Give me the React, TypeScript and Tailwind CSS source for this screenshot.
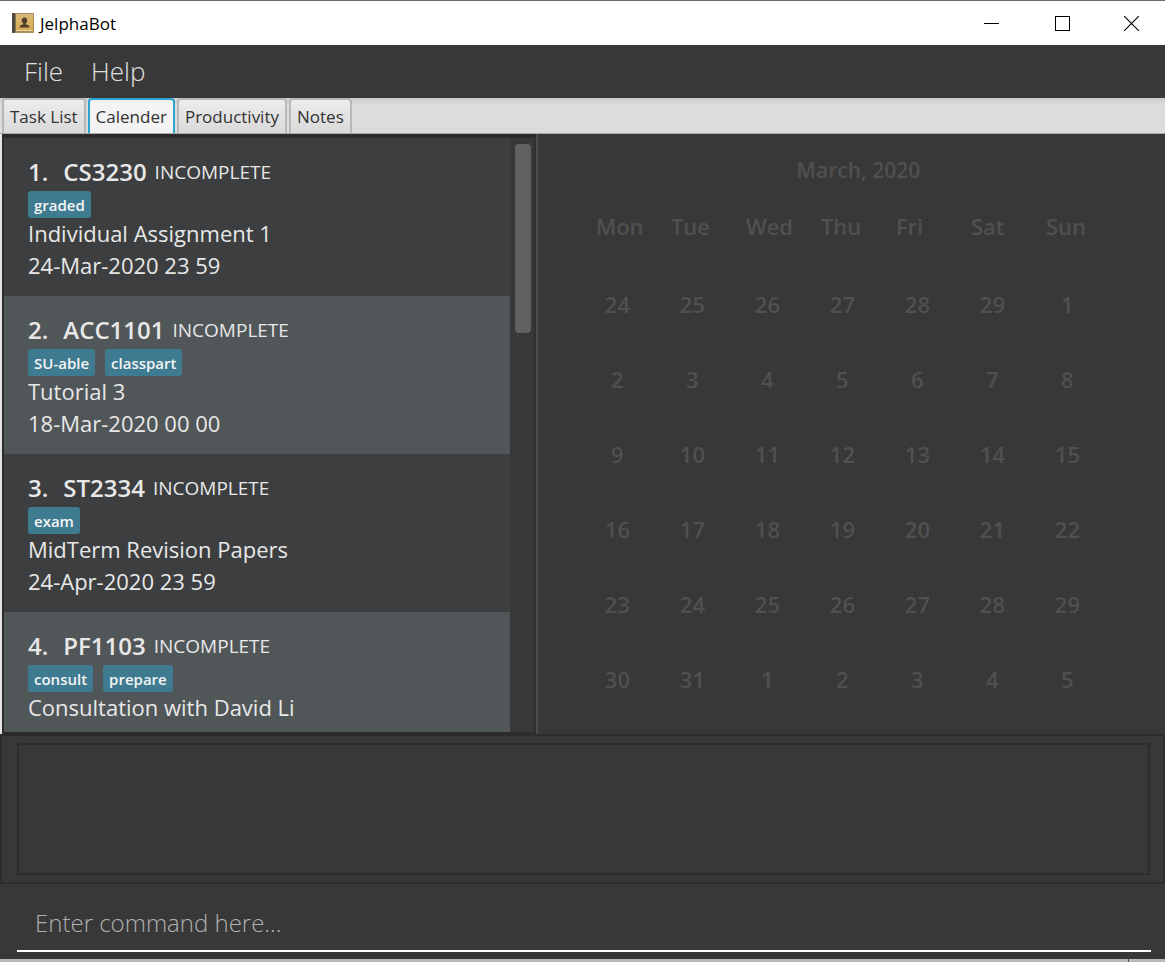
import { useState } from "react";

type Task = {
  module: string;
  status: string;
  tags: string[];
  description: string;
  due: string;
};

const tasks: Task[] = [
  { module: "CS3230", status: "INCOMPLETE", tags: ["graded"], description: "Individual Assignment 1", due: "24-Mar-2020 23 59" },
  { module: "ACC1101", status: "INCOMPLETE", tags: ["SU-able", "classpart"], description: "Tutorial 3", due: "18-Mar-2020 00 00" },
  { module: "ST2334", status: "INCOMPLETE", tags: ["exam"], description: "MidTerm Revision Papers", due: "24-Apr-2020 23 59" },
  { module: "PF1103", status: "INCOMPLETE", tags: ["consult", "prepare"], description: "Consultation with David Li", due: "" },
];

const tabs = ["Task List", "Calender", "Productivity", "Notes"];

const weekdays = ["Mon", "Tue", "Wed", "Thu", "Fri", "Sat", "Sun"];

const weeks = [
  [24, 25, 26, 27, 28, 29, 1],
  [2, 3, 4, 5, 6, 7, 8],
  [9, 10, 11, 12, 13, 14, 15],
  [16, 17, 18, 19, 20, 21, 22],
  [23, 24, 25, 26, 27, 28, 29],
  [30, 31, 1, 2, 3, 4, 5],
];

function BookIcon() {
  return (
    <svg width="22" height="21" viewBox="0 0 22 21" aria-hidden="true">
      <defs>
        <linearGradient id="cover" x1="0" y1="0" x2="0" y2="1">
          <stop offset="0" stopColor="#d3b67f" />
          <stop offset="0.4" stopColor="#dcb468" />
          <stop offset="1" stopColor="#d6a856" />
        </linearGradient>
      </defs>
      <rect x="0" y="0" width="22" height="20" rx="1" fill="#a98a55" />
      <rect x="4" y="1" width="17" height="17" fill="url(#cover)" />
      <rect x="0" y="0" width="3" height="20" rx="1" fill="#51483f" />
      <rect x="3" y="1" width="1" height="18" fill="#857352" />
      <rect x="4" y="17" width="17" height="1" fill="#ead7aa" />
      <path d="M12.500 4.500c1.700 0 2.700 1.200 2.700 2.900 0 1.300-.6 2.300-1.400 2.900v1.200c1.800.4 3.700.9 3.700 3H7.500c0-2.100 1.900-2.600 3.700-3v-1.200c-.8-.6-1.400-1.600-1.400-2.900 0-1.700 1-2.900 2.700-2.900z" fill="#4d3f2b" />
    </svg>
  );
}

function TitleBar() {
  return (
    <header className="flex h-[45px] shrink-0 items-center border-t border-[#6b6b6b] bg-white pl-3">
      <BookIcon />
      <h1 className="ml-[6px] flex-1 pt-px text-[17px] leading-6 text-black">JelphaBot</h1>
      <button aria-label="Minimize" className="flex h-full w-[71px] items-center justify-center text-black">
        <svg width="15" height="15" viewBox="0 0 15 15" aria-hidden="true">
          <path d="M0 7.5H15" stroke="currentColor" />
        </svg>
      </button>
      <button aria-label="Maximize" className="flex h-full w-[71px] items-center justify-center text-black">
        <svg width="15" height="15" viewBox="0 0 15 15" aria-hidden="true">
          <rect x="0.5" y="0.5" width="14" height="14" fill="none" stroke="currentColor" />
        </svg>
      </button>
      <button aria-label="Close" className="flex h-full w-[67px] items-center justify-center text-black">
        <svg width="15" height="15" viewBox="0 0 15 15" aria-hidden="true">
          <path d="M0 0L15 15M15 0L0 15" stroke="currentColor" strokeWidth="1.1" />
        </svg>
      </button>
    </header>
  );
}

function MenuBar() {
  return (
    <nav className="flex h-[53px] shrink-0 items-center gap-7 pb-[2px] pl-6 text-[26px] font-light leading-8 text-[#e0e0e0]">
      <button>File</button>
      <button>Help</button>
    </nav>
  );
}

function TabBar() {
  const [active, setActive] = useState("Calender");
  return (
    <div
      role="tablist"
      className="flex h-9 shrink-0 items-stretch gap-[2px] border-b border-[#a8a8a8] bg-linear-to-b from-[#cbcbcb] to-[#dcdcdc] to-20% pl-[2px]"
    >
      {tabs.map((tab) => (
        <button
          key={tab}
          role="tab"
          aria-selected={tab === active}
          onClick={() => setActive(tab)}
          className={
            tab === active
              ? "rounded-t-[4px] border-2 border-b-0 border-[#2ba4cf] bg-[#f3f3f3] px-[6px] text-[17px] leading-6 text-[#323232]"
              : "rounded-t-[4px] border-2 border-b-0 border-[#b8b8b8] bg-linear-to-b from-[#ececec] to-[#d9d9d9] px-[6px] text-[17px] leading-6 text-[#323232]"
          }
        >
          {tab}
        </button>
      ))}
    </div>
  );
}

function TaskCard({ task, index }: { task: Task; index: number }) {
  return (
    <li className="h-[158px] pl-6 pt-[18px] text-[#e8e8e8] odd:bg-[#3c3e3f] even:bg-[#515658]">
      <div className="flex h-8 items-center">
        <h2 className="flex gap-[15px] text-[24px] font-semibold leading-8">
          <span>{index}.</span>
          <span>{task.module}</span>
        </h2>
        <span className="ml-2 text-[19px] leading-8">{task.status}</span>
      </div>
      <div className="mt-[3px] flex h-[26px] items-start gap-[10px]">
        {task.tags.map((tag) => (
          <span key={tag} className="h-[27px] rounded-[3px] bg-[#3e7b91] px-[6px] text-[15px] font-semibold leading-7 text-[#f4f4f4]">
            {tag}
          </span>
        ))}
      </div>
      <p className="text-[22px] leading-8">{task.description}</p>
      <p className="text-[22px] leading-8">{task.due}</p>
    </li>
  );
}

function TaskPane() {
  return (
    <section aria-label="Tasks" className="flex w-[46%] shrink-0 border-l-2 border-[#e4e4e4]">
      <div className="flex min-w-0 flex-1 border-2 border-t-4 border-[#2b2b2b] border-r-[#2f2f2f]">
        <ol className="min-w-0 flex-1 overflow-hidden">
          {tasks.map((task, i) => (
            <TaskCard key={task.module} task={task} index={i + 1} />
          ))}
        </ol>
        <div className="w-6 shrink-0 pl-[5px] pt-[6px]">
          <div className="h-[189px] w-4 rounded-[4px] bg-[#616161]" />
        </div>
      </div>
    </section>
  );
}

function Calendar() {
  return (
    <section aria-label="Calendar" className="min-w-0 flex-1 overflow-hidden border-l-2 border-[#4a4a4a] pl-[42px] pt-5 font-semibold text-[#505050]">
      <h2 className="w-[557px] text-center text-[21px] leading-8">March, 2020</h2>
      <table className="mt-6 w-[525px] table-fixed text-[22px] leading-8">
        <thead>
          <tr className="h-14">
            {weekdays.map((day) => (
              <th key={day} scope="col" className="pl-4 text-left align-top font-semibold">
                {day}
              </th>
            ))}
          </tr>
        </thead>
        <tbody>
          {weeks.map((week) => (
            <tr key={week.join("-")} className="h-[75px]">
              {week.map((day) => (
                <td key={day} className="text-center">
                  {day}
                </td>
              ))}
            </tr>
          ))}
        </tbody>
      </table>
    </section>
  );
}

export default function App() {
  return (
    <div className="flex h-screen flex-col overflow-hidden bg-[#383838] font-['Open_Sans','Noto_Sans',sans-serif]">
      <TitleBar />
      <MenuBar />
      <TabBar />
      <main className="flex min-h-0 flex-1">
        <TaskPane />
        <Calendar />
      </main>
      <section aria-label="Result" className="h-[150px] shrink-0 border-2 border-[#2d2d2d] py-[7px] pl-[15px] pr-[13px]">
        <output className="block h-full border-2 border-[#2d2d2d]" />
      </section>
      <form className="h-[75px] shrink-0 pl-[17px] pr-[14px] pt-3" onSubmit={(e) => e.preventDefault()}>
        <input
          aria-label="Command"
          placeholder="Enter command here..."
          className="h-14 w-full border-b-2 border-white bg-transparent px-[18px] pb-[2px] text-[24px] font-light text-[#e0e0e0] outline-none placeholder:text-[#b0b0b0]"
        />
      </form>
      <footer className="flex h-[3px] shrink-0 justify-end bg-[#b9b9b9] pr-9">
        <span className="w-px bg-[#555555]" />
      </footer>
    </div>
  );
}
